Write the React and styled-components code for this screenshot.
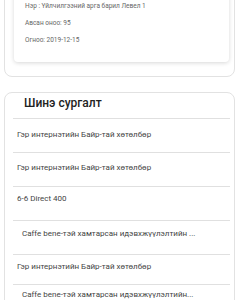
import React from 'react';
import styled, { createGlobalStyle } from 'styled-components';

const GlobalStyle = createGlobalStyle`
  body {
    margin: 0;
    background: #fff;
    font-family: Roboto, "Liberation Sans", sans-serif;
  }
`;

const result = [
  'Нэр : Үйлчилгээний арга барил Левел 1',
  'Авсан оноо: 95',
  'Огноо: 2019-12-15'
];

const trainings = [
  { title: 'Гэр интернэтийн Байр-тай хөтөлбөр', top: 11 },
  { title: 'Гэр интернэтийн Байр-тай хөтөлбөр', top: 10 },
  { title: '6-6 Direct 400', top: 7 },
  { title: 'Caffe bene-тэй хамтарсан идэвхжүүлэлтийн ...', top: 8, indent: true },
  { title: 'Гэр интернэтийн Байр-тай хөтөлбөр', top: 7, tight: true },
  { title: 'Caffe bene-тэй хамтарсан идэвхжүүлэлтийн...', top: 5, indent: true }
];

const App = () => (
  <Page>
    <GlobalStyle />
    <ResultCard>
      <ResultInner>
        {result.map((line) => (
          <ResultLine key={line}>{line}</ResultLine>
        ))}
      </ResultInner>
    </ResultCard>
    <ListCard>
      <ListTitle>Шинэ сургалт</ListTitle>
      <List>
        {trainings.map((item, i) => (
          <ListItem key={i} indent={item.indent} top={item.top} tight={item.tight}>
            {item.title}
          </ListItem>
        ))}
      </List>
    </ListCard>
  </Page>
);

const Page = styled.div`
  height: 300px;
  overflow: hidden;
  padding: 0 6px 0 4px;
`;

const ResultCard = styled.div`
  margin-top: -30px;
  border: 1px solid #e2e2e2;
  border-radius: 8px;
  padding: 10px 5px 14px 9px;
`;

const ResultInner = styled.div`
  display: flex;
  flex-direction: column;
  gap: 9px;
  padding: 21px 11px 18px;
  border-radius: 4px;
  box-shadow: 0 1px 4px rgba(0, 0, 0, 0.16);
`;

const ResultLine = styled.div`
  font-size: 6.5px;
  line-height: 8px;
  color: #666;
`;

const ListCard = styled.div`
  margin-top: 15px;
  border: 1px solid #e2e2e2;
  border-radius: 8px;
  padding: 3px 3px 0 8px;
`;

const ListTitle = styled.div`
  padding-left: 11px;
  font-size: 12px;
  line-height: 14px;
  font-weight: 500;
  color: #222;
`;

const List = styled.div`
  margin-top: 8px;
  padding-right: 1px;
`;

const ListItem = styled.div`
  box-sizing: border-box;
  height: ${(props) => (props.tight ? '30px' : '34px')};
  border-top: 1px solid #e0e0e0;
  padding: ${(props) => props.top}px 0 0 ${(props) => (props.indent ? '9px' : '4px')};
  font-size: 8px;
  line-height: 10px;
  color: #444;
  white-space: nowrap;
`;

export default App;
